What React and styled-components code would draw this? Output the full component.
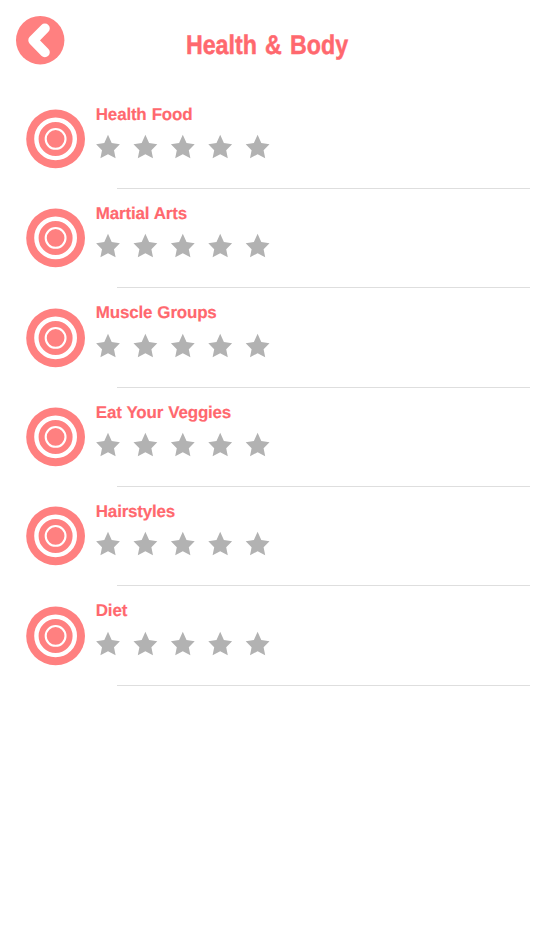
import React from 'react';
import styled, { createGlobalStyle } from 'styled-components';

const GlobalStyle = createGlobalStyle`
    body {
        margin: 0;
        background: #fff;
        font-family: 'Liberation Sans', Arial, sans-serif;
        text-rendering: geometricPrecision;
    }
`;

const Page = styled.div`
    box-sizing: border-box;
    min-height: 950px;
    overflow: hidden;
`;

const Header = styled.header`
    display: grid;
    grid-template-columns: 66px 1fr 66px;
    box-sizing: border-box;
    height: 89.5px;
    padding-top: 16px;
`;

const BackButton = styled.button`
    width: 49px;
    height: 49px;
    margin-left: 16px;
    padding: 0;
    border: 0;
    background: none;

    svg {
        display: block;
    }
`;

const Title = styled.h1`
    margin: 13px 0 0;
    color: #ff686e;
    font-size: 27px;
    line-height: 32px;
    text-align: center;
    white-space: nowrap;
    word-spacing: 2px;
    transform: scaleX(0.86);
    -webkit-text-stroke: 0.5px #ff686e;
`;

const List = styled.ul`
    margin: 0;
    padding: 0;
    list-style: none;
`;

const Row = styled.li`
    display: flex;
    flex-direction: column;
    height: 99.35px;
`;

const RowBody = styled.div`
    display: flex;
    flex: 1;
    padding-left: 26px;
`;

const Target = styled.svg`
    flex: none;
    width: 59px;
    height: 60px;
    margin-top: 19.6px;
`;

const Details = styled.div`
    padding: 15px 0 0 10.8px;
`;

const Label = styled.h2`
    margin: 0;
    color: #ff686e;
    font-size: 17px;
    line-height: 20px;
    letter-spacing: -0.2px;
    word-spacing: 0.6px;
    -webkit-text-stroke: 0.15px #ff686e;
`;

const Stars = styled.svg`
    display: block;
    width: 175px;
    height: 25px;
    margin-top: 9.6px;
    fill: #b2b2b2;
`;

const Divider = styled.div`
    height: 1px;
    margin: 0 4px 0 117px;
    background: #dedede;
`;

const STAR_PITCH = 37.4;

const topics = [
    'Health Food',
    'Martial Arts',
    'Muscle Groups',
    'Eat Your Veggies',
    'Hairstyles',
    'Diet',
];

const TargetIcon = () => (
    <Target viewBox="0 0 59 60">
        <circle cx="29.6" cy="29.9" r="29.4" fill="#ff8080" />
        <circle cx="29.6" cy="29.9" r="19.2" fill="none" stroke="#fff" strokeWidth="4.4" />
        <circle cx="29.6" cy="29.9" r="9.9" fill="none" stroke="#fff" strokeWidth="2.1" />
    </Target>
);

const StarRating = () => (
    <Stars viewBox="0 0 175 25">
        {[0, 1, 2, 3, 4].map((n) => (
            <path
                key={n}
                transform={`translate(${n * STAR_PITCH} 0)`}
                d="M12 0.7 L15.7 9 L23.9 10.2 L18 16.3 L19.6 24.2 L12 20.3 L4.4 24.2 L6 16.3 L0.1 10.2 L8.3 9 Z"
            />
        ))}
    </Stars>
);

const TopicRow = ({ name }) => (
    <Row>
        <RowBody>
            <TargetIcon />
            <Details>
                <Label>{name}</Label>
                <StarRating />
            </Details>
        </RowBody>
        <Divider />
    </Row>
);

const App = () => (
    <Page>
        <GlobalStyle />
        <Header>
            <BackButton aria-label="Back">
                <svg width="49" height="49" viewBox="0 0 49 49">
                    <circle cx="24.2" cy="24.2" r="24.2" fill="#ff8080" />
                    <path
                        d="M28.9 12.4 L17.2 24.3 L28.9 36.3"
                        fill="none"
                        stroke="#fff"
                        strokeWidth="9.8"
                        strokeLinecap="round"
                        strokeLinejoin="round"
                    />
                </svg>
            </BackButton>
            <Title>Health &amp; Body</Title>
        </Header>
        <List>
            {topics.map((name) => (
                <TopicRow key={name} name={name} />
            ))}
        </List>
    </Page>
);

export default App;
